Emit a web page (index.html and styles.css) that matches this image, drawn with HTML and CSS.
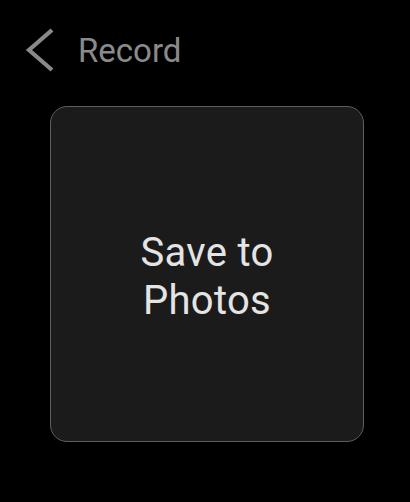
FILE: index.html
```html
<!DOCTYPE html>
<html>
<head>
<meta charset="utf-8">
<link rel="stylesheet" href="styles.css">
</head>
<body>
<div class="screen">
  <div class="header">
    <svg class="back" width="32" height="48" viewBox="0 0 32 48">
      <polyline points="28,4 5,24 28,44" fill="none" stroke="#8a8a8a" stroke-width="4.2" stroke-linejoin="miter"/>
    </svg>
    <span class="title">Record</span>
  </div>
  <div class="card">
    <div class="label">Save to<br>Photos</div>
  </div>
</div>
</body>
</html>
```
FILE: styles.css
```css
html, body {
  margin: 0;
  padding: 0;
  background: #000;
}
.screen {
  width: 410px;
  height: 502px;
  background: #000;
  font-family: Roboto, "Noto Sans", sans-serif;
  display: flex;
  flex-direction: column;
}
.header {
  display: flex;
  align-items: center;
  height: 48px;
  margin-top: 26px;
  padding-left: 24px;
}
.back {
  display: block;
  flex: none;
}
.title {
  margin-left: 22px;
  font-size: 33px;
  color: #8a8a8a;
  line-height: 48px;
  padding-top: 2px;
}
.card {
  box-sizing: border-box;
  margin-top: 32px;
  margin-left: 50px;
  width: 314px;
  height: 336px;
  border: 1.5px solid #5e5e5e;
  border-radius: 17px;
  background: #1b1b1b;
  display: flex;
  align-items: center;
  justify-content: center;
}
.label {
  text-align: center;
  font-size: 40px;
  line-height: 48px;
  color: #e4e4e4;
  letter-spacing: 0.3px;
  padding-top: 5px;
}
```
